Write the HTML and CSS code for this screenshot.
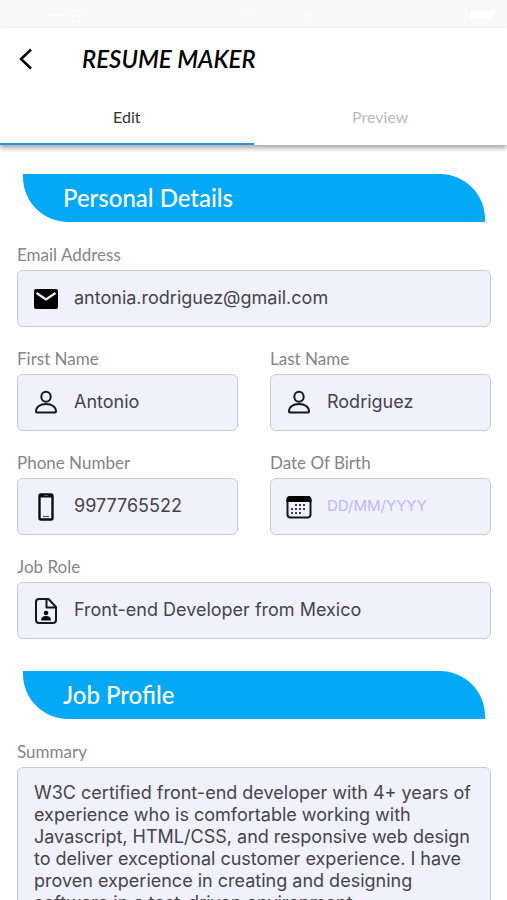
FILE: index.html
```html
<!DOCTYPE html>
<html lang="en">
<head>
<meta charset="utf-8">
<meta name="viewport" content="width=device-width, initial-scale=1">
<title>Resume Maker</title>
<link rel="stylesheet" href="styles.css">
</head>
<body>
<div class="app">
  <div class="status">
    <svg width="76" height="14" viewBox="0 0 76 14" aria-hidden="true"><path d="M38 8h16"/><path d="M58 7q8-7 16 0M62 10q4-3 8 0"/></svg>
    <svg width="70" height="14" viewBox="0 0 70 14" aria-hidden="true"><path d="M2 4h6M66 4v8"/></svg>
    <svg width="28" height="14" viewBox="0 0 28 14" aria-hidden="true"><rect x="2" y="3" width="23" height="9" rx="2"/></svg>
  </div>
  <header class="header">
    <div class="title-bar">
      <button class="back" type="button" aria-label="Back">
        <svg width="16" height="24" viewBox="0 0 16 24" aria-hidden="true"><path d="M13 2.500 3 12l10 9.500"/></svg>
      </button>
      <h1 class="title">RESUME MAKER</h1>
    </div>
    <nav class="tabs">
      <button class="tab tab-active" type="button">Edit</button>
      <button class="tab" type="button">Preview</button>
    </nav>
  </header>

  <main class="content">
    <section class="section">
      <h2 class="banner">Personal Details</h2>
      <div class="fields">
        <div class="field field-wide">
          <label class="label" for="email">Email Address</label>
          <div class="box">
            <svg class="icon" viewBox="0 0 28 28" aria-hidden="true"><rect x="2" y="4" width="24" height="20" rx="2" fill="#000"/><path d="m4.500 8 9.500 6.500L23.500 8" fill="none" stroke="#f1f1fc" stroke-width="2.200"/></svg>
            <input class="input" id="email" type="email" value="antonia.rodriguez@gmail.com">
          </div>
        </div>
        <div class="field">
          <label class="label" for="first">First Name</label>
          <div class="box">
            <svg class="icon line" viewBox="0 0 28 28" aria-hidden="true"><ellipse cx="14" cy="7.700" rx="4.700" ry="5"/><path d="M4 22.500c0-4.500 4.200-7.500 10-7.500s10 3 10 7.500q0 1-1 1H5q-1 0-1-1z"/></svg>
            <input class="input" id="first" type="text" value="Antonio">
          </div>
        </div>
        <div class="field">
          <label class="label" for="last">Last Name</label>
          <div class="box">
            <svg class="icon line" viewBox="0 0 28 28" aria-hidden="true"><ellipse cx="14" cy="7.700" rx="4.700" ry="5"/><path d="M4 22.500c0-4.500 4.200-7.500 10-7.500s10 3 10 7.500q0 1-1 1H5q-1 0-1-1z"/></svg>
            <input class="input" id="last" type="text" value="Rodriguez">
          </div>
        </div>
        <div class="field">
          <label class="label" for="phone">Phone Number</label>
          <div class="box">
            <svg class="icon" viewBox="0 0 28 28" aria-hidden="true"><rect x="7.500" y="1.500" width="13" height="25" rx="1.500" fill="none" stroke="#0c0c12" stroke-width="2.400"/><path d="M7.500 1.500h13v3h-13z" fill="#0c0c12"/><path d="M12 2.600h4" stroke="#777" stroke-width=".8"/><path d="M11 23.500h6" stroke="#555" stroke-width="1.200"/></svg>
            <input class="input" id="phone" type="tel" value="9977765522">
          </div>
        </div>
        <div class="field">
          <label class="label" for="birth">Date Of Birth</label>
          <div class="box">
            <svg class="icon" viewBox="0 0 28 28" aria-hidden="true"><rect x="2.500" y="4" width="23" height="20.500" rx="3" fill="none" stroke="#16161c" stroke-width="2"/><path d="M1.500 9V7q0-4 4-4h17q4 0 4 4v2z" fill="#000"/><g stroke="#3c3c44" stroke-width="2" stroke-dasharray="2 2"><path d="M10 12h12M6 16h16M6 20h12"/></g></svg>
            <input class="input input-date" id="birth" type="text" placeholder="DD/MM/YYYY">
          </div>
        </div>
        <div class="field field-wide">
          <label class="label" for="role">Job Role</label>
          <div class="box">
            <svg class="icon line" viewBox="0 0 28 28" aria-hidden="true"><path d="M7 2h9.500L24 10v13q0 3-3 3H7q-3 0-3-3V5q0-3 3-3zM14.500 2v8.500H24"/><g fill="#0c0c12" stroke="none"><circle cx="14" cy="16" r="2.300"/><path d="M9 23.500q0-4.500 5-4.500t5 4.500z"/></g></svg>
            <input class="input" id="role" type="text" value="Front-end Developer from Mexico">
          </div>
        </div>
      </div>
    </section>

    <section class="section">
      <h2 class="banner">Job Profile</h2>
      <div class="fields">
        <div class="field field-wide">
          <label class="label" for="summary">Summary</label>
          <textarea class="summary" id="summary" rows="7">W3C certified front-end developer with 4+ years of experience who is comfortable working with Javascript, HTML/CSS, and responsive web design to deliver exceptional customer experience. I have proven experience in creating and designing software in a test-driven environment.</textarea>
        </div>
      </div>
    </section>
  </main>
</div>
</body>
</html>
```
FILE: styles.css
```css
* {
  box-sizing: border-box;
}

body {
  margin: 0;
  background: #fff;
  font-family: Lato, sans-serif;
}

button,
input,
textarea {
  font: inherit;
}

.app {
  display: flex;
  flex-direction: column;
  height: 100vh;
  overflow: hidden;
}

.status {
  display: flex;
  flex: none;
  align-items: center;
  justify-content: space-between;
  height: 28px;
  padding: 0 10px;
  background: #f9f9f9;
}

.status path {
  fill: none;
  stroke: #fdfdfd;
  stroke-width: 2;
}

.status rect {
  fill: #fff;
}

.header {
  position: relative;
  flex: none;
  background: #fff;
  box-shadow: 0 3px 5px rgba(0, 0, 0, 0.35);
}

.title-bar {
  display: flex;
  align-items: center;
  gap: 48px;
  height: 62px;
  padding: 0 18px;
}

.back {
  display: flex;
  padding: 0;
  border: 0;
  background: none;
}

.back path {
  fill: none;
  stroke: #000;
  stroke-width: 2.5;
}

.title {
  margin: 0;
  color: #000;
  font-size: 24px;
  font-style: italic;
  font-weight: 600;
  line-height: 32px;
}

.tabs {
  display: grid;
  grid-template-columns: 1fr 1fr;
}

.tab {
  height: 55px;
  padding: 0;
  border: 0;
  border-bottom: 2px solid transparent;
  background: none;
  color: #bcbcbc;
  font-size: 16px;
}

.tab-active {
  border-bottom-color: #2a93df;
  color: #333;
}

.content {
  display: flex;
  flex: 1;
  flex-direction: column;
  gap: 32px;
  min-height: 0;
  padding: 29px 16px 32px 17px;
  overflow-y: auto;
  scrollbar-width: none;
}

.banner {
  margin: 0 6px 23px;
  padding: 0 40px;
  border-radius: 0 45px 0 45px;
  background: #03a9f4;
  color: #fff;
  font-size: 24px;
  font-weight: 500;
  line-height: 48px;
}

.fields {
  display: grid;
  grid-template-columns: 1fr 1fr;
  gap: 22px 32px;
}

.field {
  display: flex;
  flex-direction: column;
  gap: 5px;
  min-width: 0;
}

.field-wide {
  grid-column: 1 / -1;
}

.label {
  color: #858585;
  font-size: 17px;
  line-height: 20px;
}

.box,
.summary {
  border: 1px solid #cacacf;
  border-radius: 6px;
  background: #f1f1fc;
}

.box {
  display: flex;
  align-items: center;
  gap: 14px;
  height: 57px;
  padding: 0 14px;
}

.icon {
  flex: none;
  width: 28px;
  height: 28px;
}

.line {
  fill: none;
  stroke: #16161c;
  stroke-width: 2;
  stroke-linejoin: round;
}

.input {
  flex: 1;
  min-width: 0;
  height: 32px;
  padding: 0 0 2px;
  border: 0;
  outline: 0;
  background: none;
  color: #44444c;
  font-family: Inter, sans-serif;
  font-size: 18px;
}

.input-date {
  font-size: 15px;
}

.input::placeholder {
  color: #bcb9fa;
  opacity: 1;
}

.summary {
  width: 100%;
  padding: 14px 16px;
  outline: 0;
  color: #44444c;
  font-family: Inter, sans-serif;
  font-size: 18px;
  line-height: 22px;
  resize: none;
  overflow: hidden;
}
```
